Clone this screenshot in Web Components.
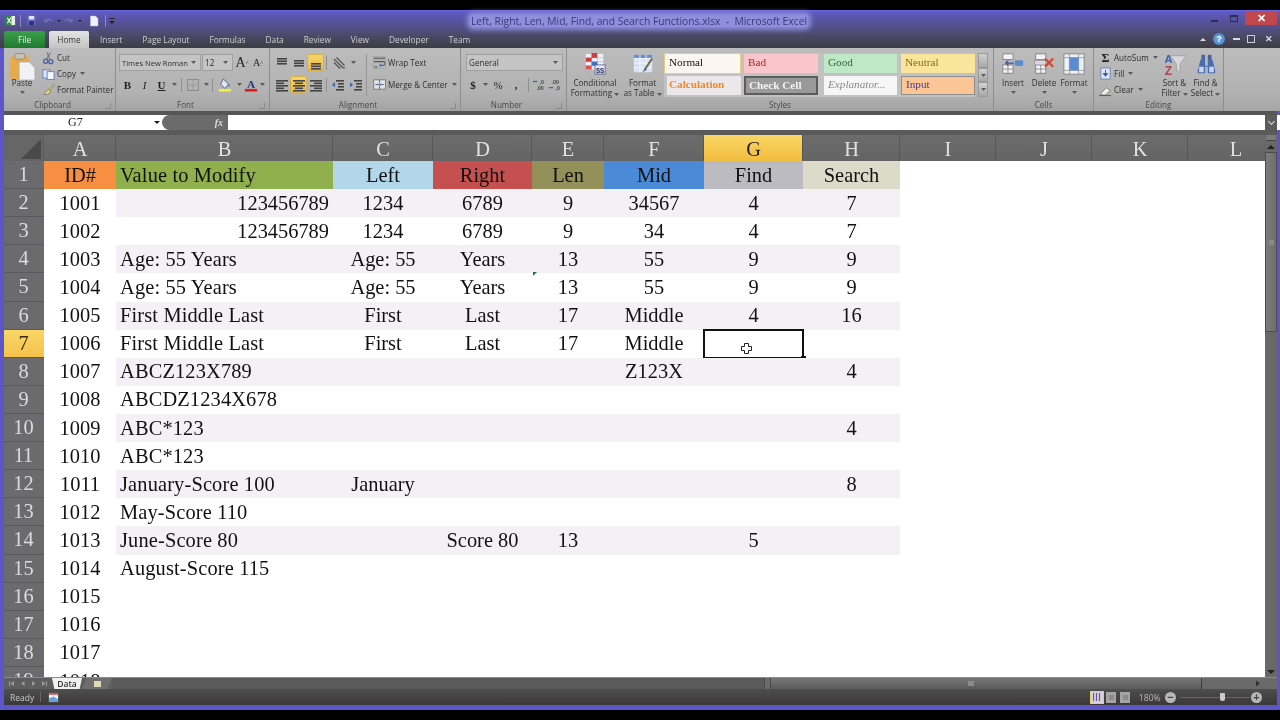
<!DOCTYPE html>
<html><head><meta charset="utf-8"><title>Excel</title>
<style>
html,body{margin:0;padding:0;background:#000;width:1280px;height:720px;overflow:hidden}
</style></head><body>
<x-excel>
  <x-titlebar slot="title"></x-titlebar>
  <x-tabs slot="tabs"></x-tabs>
  <x-ribbon slot="ribbon">
    <x-group label="Clipboard" w="112" launcher>
      <x-big icon="paste" w="36" line1="Paste" caret></x-big>
      <div style="display:flex;flex-direction:column;gap:2px;padding:2px 0 0 2px">
        <x-small icon="cut" text="Cut"></x-small>
        <x-small icon="copy" text="Copy" caret></x-small>
        <x-small icon="painter" text="Format Painter"></x-small>
      </div>
    </x-group>
    <x-group label="Font" w="154" launcher>
      <div style="display:flex;flex-direction:column;gap:5px;padding:6px 0 0 3px">
        <div style="display:flex;align-items:center;gap:1px">
          <x-combo w="82" text="Times New Roman" fs="7.6"></x-combo><x-combo w="31" text="12"></x-combo>
          <x-tool w="16" tx="A" ts="14" sup="1"></x-tool><x-tool w="14" tx="A" ts="10" sup="1"></x-tool>
        </div>
        <div style="display:flex;align-items:center">
          <x-tool w="17" tx="B" ts="11" tb="1"></x-tool><x-tool w="17" tx="I" ts="11" ti="1"></x-tool><x-tool w="17" tx="U" ts="11" tb="1" tu="1"></x-tool>
          <x-tool w="9" caretonly="1"></x-tool><x-sep></x-sep><x-tool w="18" icon="borders"></x-tool><x-tool w="8" caretonly="1"></x-tool><x-sep></x-sep>
          <x-tool w="20" icon="fill"></x-tool><x-tool w="8" caretonly="1"></x-tool><x-tool w="15" icon="fontcolor"></x-tool><x-tool w="8" caretonly="1"></x-tool>
        </div>
      </div>
    </x-group>
    <x-group label="Alignment" w="191" launcher>
      <div style="display:flex;flex-direction:column;gap:5px;padding:6px 0 0 3px;width:93px">
        <div style="display:flex;align-items:center">
          <x-tool w="17" icon="atop"></x-tool><x-tool w="17" icon="amid"></x-tool><x-tool w="17" icon="abot" on="1"></x-tool><x-sep></x-sep><x-tool w="20" icon="orient"></x-tool><x-tool w="9" caretonly="1"></x-tool>
        </div>
        <div style="display:flex;align-items:center">
          <x-tool w="17" icon="aleft"></x-tool><x-tool w="17" icon="acenter" on="1"></x-tool><x-tool w="17" icon="aright"></x-tool><x-sep></x-sep><x-tool w="18" icon="indl"></x-tool><x-tool w="17" icon="indr"></x-tool>
        </div>
      </div>
      <div style="width:1px;height:42px;margin:6px 6px 0 0;background:#969696"></div>
      <div style="display:flex;flex-direction:column;gap:5px;padding-top:6px">
        <x-small icon="wrap" text="Wrap Text" h="17"></x-small>
        <x-small icon="merge" text="Merge &amp; Center" caret h="17"></x-small>
      </div>
    </x-group>
    <x-group label="Number" w="106" launcher>
      <div style="display:flex;flex-direction:column;gap:5px;padding:6px 0 0 5px">
        <x-combo w="97" text="General"></x-combo>
        <div style="display:flex;align-items:center">
          <x-tool w="14" tx="$" ts="11" tb="1"></x-tool><x-tool w="10" caretonly="1"></x-tool><x-tool w="16" tx="%" ts="11"></x-tool><x-tool w="20" tx="," ts="11" tb="1"></x-tool><x-sep></x-sep><x-tool w="16" icon="incd"></x-tool><x-tool w="16" icon="decd"></x-tool>
        </div>
      </div>
    </x-group>
    <x-group label="Styles" w="427">
      <x-big icon="cond" w="56" line1="Conditional" line2="Formatting" caret2></x-big>
      <x-big icon="table" w="39" line1="Format" line2="as Table" caret2></x-big>
      <x-gallery></x-gallery>
    </x-group>
    <x-group label="Cells" w="100">
      <div style="display:flex;padding-left:3px">
        <x-big icon="ins" w="32" line1="Insert" caret></x-big>
        <x-big icon="del" w="30" line1="Delete" caret></x-big>
        <x-big icon="fmt" w="30" line1="Format" caret></x-big>
      </div>
    </x-group>
    <x-group label="Editing" w="130">
      <div style="display:flex;flex-direction:column;gap:2px;padding:2px 0 0 5px;width:60px">
        <x-small icon="sigma" text="AutoSum" caret></x-small>
        <x-small icon="filld" text="Fill" caret></x-small>
        <x-small icon="clear" text="Clear" caret></x-small>
      </div>
      <x-big icon="sort" w="31" line1="Sort &amp;" line2="Filter" caret2></x-big>
      <x-big icon="find" w="31" line1="Find &amp;" line2="Select" caret2></x-big>
    </x-group>
  </x-ribbon>
  <x-formula slot="formula"></x-formula>
  <x-sheet slot="sheet"></x-sheet>
  <x-vscroll slot="vscroll"></x-vscroll>
  <x-sheetbar slot="sheetbar"></x-sheetbar>
  <x-status slot="status"></x-status>
</x-excel>
<script>
const UI='"Noto Sans","Open Sans",sans-serif';
const lines=(ys,col='#444')=>ys.map(([x,y,w])=>`<rect x="${x}" y="${y}" width="${w}" height="1.6" fill="${col}"/>`).join('');
const ICONS={
 xl:[12,`<rect x="0.5" y="0.5" width="11" height="11" fill="#e8f0e4" stroke="#2f7a3a"/><rect x="1" y="1" width="6" height="10" fill="#2e8b40"/><path d="M2.5 3l4 6M6.5 3l-4 6" stroke="#fff" stroke-width="1.3"/>`],
 save:[12,`<rect x="1" y="1" width="10" height="10" fill="#5a62c0"/><rect x="3" y="1" width="6" height="4" fill="#dfe3f5"/><rect x="3.5" y="7" width="5" height="4" fill="#2b2f70"/>`],
 undo:[12,`<path d="M3 7a4 4 0 0 1 7-1" fill="none" stroke="#6f72b8" stroke-width="1.6"/><path d="M1.5 4l2 4 3-2z" fill="#6f72b8"/>`],
 redo:[12,`<path d="M9 7a4 4 0 0 0-7-1" fill="none" stroke="#6f72a8" stroke-width="1.6"/><path d="M10.5 4l-2 4-3-2z" fill="#6f72a8"/>`],
 doc:[12,`<path d="M2.5 1h5l2.5 2.5V11h-7.5z" fill="#f2f2fb" stroke="#b9bbe0" stroke-width=".5"/>`],
 cust:[8,`<rect x="1" y="1" width="6" height="1" fill="#222"/><path d="M1 4h6l-3 3z" fill="#222"/>`],
 paste:[24,`<rect x="1" y="3" width="17" height="20" rx="1" fill="#e5ab4c"/><rect x="5" y="0.5" width="9" height="5" rx="1" fill="#c9c2b4" stroke="#8a7a5a" stroke-width=".6"/><path d="M9 8h9l5 5v11H9z" fill="#f2f2f6" stroke="#a6a6b4" stroke-width=".6"/>`],
 cut:[14,`<circle cx="4" cy="11" r="2.2" fill="none" stroke="#4a5fa8" stroke-width="1.4"/><circle cx="9.5" cy="11.5" r="2.2" fill="none" stroke="#4a5fa8" stroke-width="1.4"/><path d="M5 9L9 1.5M8.5 9.5L5.5 1.5" stroke="#6e7480" stroke-width="1.2"/>`],
 copy:[14,`<rect x="1" y="3" width="7.5" height="9" fill="#dfe8f6" stroke="#5a83c0"/><rect x="5.5" y="5" width="7.5" height="8.5" fill="#f6f6fa" stroke="#5a83c0"/>`],
 painter:[14,`<path d="M7.5 7l5-5.5 1 1L9 8z" fill="#d8c068" stroke="#7a6a30" stroke-width=".5"/><path d="M2 12.5c2-.5 2-5 5-5.5l2 2c-.5 3-4 4-7 3.500z" fill="#e8dc80" stroke="#555" stroke-width=".6"/>`],
 borders:[14,`<rect x="1.500" y="1.500" width="11" height="11" fill="none" stroke="#8b8b8b"/><path d="M7 1.500v11M1.500 7h11" stroke="#9d9d9d"/>`],
 fill:[16,`<path d="M6 1l6 6-4 5-5-5z" fill="#dfe6f2" stroke="#4a5f90"/><circle cx="12.500" cy="8.500" r="1" fill="#3b6fc0"/><rect x="1" y="12.500" width="14" height="3" fill="#f6ee3c"/>`],
 fontcolor:[16,`<text x="8" y="11.500" font-size="13" font-family="Liberation Serif" font-weight="700" text-anchor="middle" fill="#20388a">A</text><rect x="1" y="12.500" width="14" height="3" fill="#e21b22"/>`],
 atop:[14,lines([[2,2,10],[2,4.500,10],[2,7,10]])],
 amid:[14,lines([[2,4,10],[2,6.500,10],[2,9,10]])],
 abot:[14,lines([[2,7,10],[2,9.500,10],[2,12,10]])],
 aleft:[14,lines([[1,2,12],[1,4.500,8],[1,7,12],[1,9.500,8],[1,12,12]])],
 acenter:[14,lines([[1,2,12],[3,4.500,8],[1,7,12],[3,9.500,8],[1,12,12]])],
 aright:[14,lines([[1,2,12],[5,4.500,8],[1,7,12],[5,9.500,8],[1,12,12]])],
 orient:[14,`<path d="M2 3l9 9M4.500 1.500l8 8M2 6.500l6 6" stroke="#555" stroke-width="1.300"/><path d="M11 12l2 1-1-2.500z" fill="#444"/>`],
 indl:[14,lines([[5,2,8],[7,5,6],[7,8,6],[5,11,8]])+`<path d="M1 6.800l3-2.500v5z" fill="#3a68b0"/>`],
 indr:[14,lines([[5,2,8],[7,5,6],[7,8,6],[5,11,8]])+`<path d="M4 6.800l-3-2.500v5z" fill="#3a68b0"/>`],
 wrap:[14,`<rect x="1" y="1.500" width="12" height="2" fill="#777"/><path d="M1 6h10a2 2 0 0 1 0 4H8" fill="none" stroke="#555" stroke-width="1.200"/><path d="M8.500 8l-2 2 2 2z" fill="#3a68b0"/><rect x="1" y="11" width="4" height="1.500" fill="#777"/><rect x=".5" y=".5" width="13" height="13" fill="none" stroke="#999" stroke-width=".5"/>`],
 merge:[14,`<rect x=".8" y="2" width="12.500" height="10" fill="#e4e4e8" stroke="#666" stroke-width=".8"/><path d="M7 2v3M7 9v3" stroke="#666"/><path d="M2.500 7h3M11.500 7h-3" stroke="#3a68b0" stroke-width="1.200"/><text x="7" y="8.800" font-size="5" text-anchor="middle" font-family="Liberation Sans" fill="#333">a</text>`],
 incd:[16,`<text x="8.500" y="7" font-size="6" font-weight="700" font-family="Liberation Sans" fill="#444">,0</text><text x="5" y="14" font-size="6" font-weight="700" font-family="Liberation Sans" fill="#444">.00</text><path d="M1 4h5" stroke="#3a68b0" stroke-width="1.500"/>`],
 decd:[16,`<text x="4" y="7" font-size="6" font-weight="700" font-family="Liberation Sans" fill="#444">.00</text><text x="8.500" y="14" font-size="6" font-weight="700" font-family="Liberation Sans" fill="#444">,0</text><path d="M1 11h5" stroke="#3a68b0" stroke-width="1.500"/>`],
 cond:[24,`<rect x="2" y="1" width="19" height="17" fill="#eef0f6"/><path d="M2 5.200h19M2 9.500h19M2 13.800h19M8.300 1v17M14.600 1v17" stroke="#9fb4d4" stroke-width=".7"/><rect x="8.300" y="0" width="6" height="5.200" fill="#cf3a3a"/><rect x="2" y="5.200" width="6.300" height="4.300" fill="#cf3a3a"/><rect x="8.300" y="9.500" width="6.300" height="4.300" fill="#3b73c8"/><rect x="2" y="13.800" width="6.300" height="4.200" fill="#e05050"/><rect x="12" y="13" width="11" height="10" fill="#e8e8f0" stroke="#4a4f78" stroke-width=".8"/><text x="17.500" y="21.500" font-size="8" font-weight="700" text-anchor="middle" font-family="Liberation Sans" fill="#30386a">$$</text>`],
 table:[24,`<rect x="2" y="2" width="20" height="19" fill="#d8e2f4"/><rect x="2" y="2" width="20" height="4" fill="#6a8fcc"/><path d="M2 6h20M2 11h20M2 16h20M8.700 2v19M15.400 2v19" stroke="#f5f7fc" stroke-width="1"/><path d="M22 6L14 18" stroke="#6a7050" stroke-width="2.400"/><path d="M14.500 16l-3 5 4.500-2.500z" fill="#4e6090"/>`],
 ins:[24,`<rect x="1" y="1" width="11" height="6" fill="#f2f2f4" stroke="#666" stroke-width=".7"/><rect x="1" y="13" width="11" height="9" fill="#f2f2f4" stroke="#666" stroke-width=".7"/><path d="M6.500 13v9M1 17.500h11" stroke="#666" stroke-width=".7"/><rect x="14" y="8" width="9" height="6" fill="#5a8ad0"/><path d="M13 11H4M7 8l-3 3 3 3" fill="none" stroke="#2f58a0" stroke-width="1.200"/>`],
 del:[24,`<rect x="3" y="1" width="11" height="6" fill="#f2f2f4" stroke="#666" stroke-width=".7"/><rect x="3" y="13" width="11" height="9" fill="#f2f2f4" stroke="#666" stroke-width=".7"/><path d="M8.500 13v9M3 17.500h11" stroke="#666" stroke-width=".7"/><rect x="2" y="8" width="12" height="5" fill="#d8d8de" stroke="#777" stroke-width=".5"/><path d="M13 6l9 9M22 6l-9 9" stroke="#d8402c" stroke-width="2.200"/>`],
 fmt:[24,`<rect x="1" y="1" width="22" height="22" fill="#eceff6" stroke="#777" stroke-width=".8"/><path d="M1 5h22M1 19h22M7 1v22M17 1v22" stroke="#8c8c98" stroke-width=".8"/><rect x="7" y="5" width="10" height="14" fill="#5a8ad0"/>`],
 sigma:[14,`<text x="7" y="12" font-size="13" font-weight="700" text-anchor="middle" font-family="Liberation Serif" fill="#222">Σ</text>`],
 filld:[14,`<rect x="2" y="1" width="10" height="12" fill="#dfe6f5" stroke="#6a86bc"/><path d="M7 3v6M4.500 7L7 10l2.500-3z" fill="#2f5fb4" stroke="#2f5fb4"/>`],
 clear:[14,`<path d="M2 11l6-6 4 3-5 5H4z" fill="#f0eee8" stroke="#666" stroke-width=".8"/><path d="M0 13.500h13" stroke="#555"/>`],
 sort:[26,`<path d="M8 3h17l-6.500 9v9l-4-2.500V12z" fill="#d7d7d9" stroke="#8a8a90" stroke-width=".6"/><text x="6" y="11" font-size="12" font-weight="700" text-anchor="middle" font-family="Liberation Sans" fill="#3a62ae">A</text><text x="6" y="24" font-size="13" font-weight="700" text-anchor="middle" font-family="Liberation Sans" fill="#b0404a">Z</text>`],
 find:[24,`<rect x="7" y="2" width="4" height="6" rx="1" fill="#50609a"/><rect x="14" y="2" width="4" height="6" rx="1" fill="#50609a"/><path d="M6 7h5v7h3V7h5l3 12v3h-8v-7h-3v7H3v-3z" fill="#4a6cb0"/><rect x="4.500" y="15" width="5" height="6" fill="#c9d4ea"/><rect x="15.500" y="15" width="5" height="6" fill="#c9d4ea"/>`],
 macro:[12,`<rect x="1" y="1" width="10" height="10" fill="#eaf2fb"/><rect x="1" y="1" width="10" height="2" fill="#d05050"/><path d="M1 7l5-2 5 3v3H1z" fill="#6aa0dc"/>`]
};
function def(name,html,init){
 customElements.define(name,class extends HTMLElement{
  constructor(){super();this.attachShadow({mode:'open'});}
  connectedCallback(){
    const a=n=>this.getAttribute(n);
    this.shadowRoot.innerHTML=typeof html==='function'?html(a,n=>this.hasAttribute(n)):html;
    if(init)init(this.shadowRoot,this);
  }
 });
}
def('x-icon',a=>{const[v,c]=ICONS[a('name')];const s=a('size')||v;
 return `<style>:host{display:inline-block;width:${s}px;height:${s}px;flex:none;line-height:0}svg{display:block;width:100%;height:100%;overflow:visible}</style><svg viewBox="0 0 ${v} ${v}">${c}</svg>`});
def('x-excel',`<style>
:host{display:flex;flex-direction:column;width:1280px;height:720px;box-sizing:border-box;padding:10px 0;background:#000;filter:blur(.45px)}
.win{flex:1;display:flex;flex-direction:column;min-height:0;background:#5c56c8;border-style:solid;border-color:#5c56c8;border-width:0 3px 5px 4px;font-family:${UI}}
.head{background:linear-gradient(#615bc4 0,#55529c 30%,#4c4b6c 62%,#3d3d42 100%);margin:0 -3px 0 -4px;padding:0 3px 0 4px;border-top:1px solid #6a64e0;}
.gap{height:4px;background:#565656}.gap2{height:5px;background:#5a5a5a}
.mid{flex:1;min-height:0;display:flex}
</style><div class="win"><div class="head"><slot name="title"></slot><slot name="tabs"></slot></div><slot name="ribbon"></slot><div class="gap"></div><slot name="formula"></slot><div class="gap2"></div><div class="mid"><slot name="sheet"></slot><slot name="vscroll"></slot></div><slot name="sheetbar"></slot><slot name="status"></slot></div>`);
def('x-titlebar',`<style>
:host{display:flex;align-items:center;height:19px;font-size:10.300px}
.qa{display:flex;align-items:center;width:120px}
.s{width:1px;height:12px;background:#8a88c8}
.t{flex:1;text-align:center;white-space:pre;padding-right:50px;font-family:"Open Sans",sans-serif}
.t span{color:#3a3a78;background:#8e8edc;box-shadow:0 0 5px 3px #8e8edc;border-radius:3px;padding:0 1px;line-height:12px;display:inline-block}
.w{display:flex;align-items:flex-start;height:14px;align-self:flex-start}
.b{width:20px;height:14px;display:flex;align-items:center;justify-content:center}
.min i{display:block;width:7px;height:2px;background:#2c2c4c;margin-top:5px}
.max i{display:block;width:8px;height:7px;border:1px solid #2c2c4c;border-top-width:2px;box-sizing:border-box}
.x{width:32px;background:#c0484c;color:#fff;font:700 11px "Liberation Sans",sans-serif;margin-left:1px}
.k{margin-left:3px;width:0;height:0;border:2px solid transparent;border-top:2.500px solid #222;margin-top:3px;flex:none}
</style><div class="qa"><x-icon name="xl" size="11" style="margin-left:1px"></x-icon><div class="s" style="margin-left:4px"></div><x-icon name="save" size="11" style="margin-left:5px"></x-icon><x-icon name="undo" style="margin-left:5px"></x-icon><i class="k"></i><x-icon name="redo" style="margin-left:2px"></x-icon><i class="k"></i><x-icon name="doc" style="margin-left:6px"></x-icon><div class="s" style="margin-left:5px"></div><x-icon name="cust" style="margin-left:2px"></x-icon></div>
<div class="t"><span>Left, Right, Len, Mid, Find, and Search Functions.xlsx  -  Microsoft Excel</span></div>
<div class="w"><div class="b min"><i></i></div><div class="b max"><i></i></div><div class="b x">✕</div></div>`);
def('x-tabs',`<style>
:host{display:flex;align-items:flex-end;height:18px;font-size:8.300px;color:#cfcfcf;font-family:"Open Sans",sans-serif}
.f{width:41px;height:17px;background:linear-gradient(#3aa04a,#1f7a2f);color:#e6f2e6;display:flex;align-items:center;justify-content:center;border-radius:2px 2px 0 0;margin-right:4px}
.h{width:40px;height:17px;background:linear-gradient(#e4e4e4,#c4c4c4);color:#333;display:flex;align-items:center;justify-content:center;border-radius:2px 2px 0 0;margin-right:1px}
.n{padding:0 10px;height:17px;line-height:17px;white-space:nowrap}
.sp{flex:1}.r{display:flex;align-items:center;height:18px;padding-right:4px;color:#ddd}
.help{width:12px;height:12px;border-radius:50%;background:radial-gradient(#7ab0e8,#3a78c4);color:#fff;font:700 9px "Liberation Sans";display:flex;align-items:center;justify-content:center;margin:0 8px 0 7px}
.up{width:0;height:0;border:3px solid transparent;border-bottom:3.500px solid #ddd;margin-top:-3px}
.d{width:7px;height:2px;background:#ddd;margin-right:7px}.rs{width:8px;height:8px;border:1px solid #ccc;box-sizing:border-box;margin-right:10px}
</style><div class="f">File</div><div class="h">Home</div>
<div class="n">Insert</div><div class="n">Page Layout</div><div class="n">Formulas</div><div class="n">Data</div><div class="n">Review</div><div class="n">View</div><div class="n">Developer</div><div class="n">Team</div>
<div class="sp"></div><div class="r"><div class="up"></div><div class="help">?</div><div class="d"></div><div class="rs"></div><div style="font:700 9px 'Liberation Sans'">✕</div></div>`);
def('x-ribbon',`<style>:host{display:flex;height:63px;background:linear-gradient(#bcbcbc,#b2b2b2 70%,#a6a6a6);margin:0 -3px 0 0;font-size:8.100px;color:#2e2e2e;font-family:"Open Sans",sans-serif;overflow:hidden}
::slotted(*){flex:none}</style><slot></slot>`);
def('x-group',(a,h)=>`<style>
:host{display:flex;flex-direction:column;width:${a('w')}px;box-sizing:border-box;border-right:1px solid #8e8e8e}
.b{display:flex;height:51px}
.l{height:12px;line-height:12px;text-align:center;color:#4a4a4a;position:relative;background:linear-gradient(#aeaeae,#a3a3a3);box-sizing:border-box;padding-right:${h('launcher')?14:0}px}
.k{position:absolute;right:4px;top:4px;width:5px;height:5px;border:1px solid #8a8a8a;border-width:0 1px 1px 0}
::slotted(*){flex:none}
</style><div class="b"><slot></slot></div><div class="l">${a('label')}${h('launcher')?'<span class="k"></span>':''}</div>`);
const caret=`<svg width="5" height="3" viewBox="0 0 5 3" style="flex:none"><path d="M0 0h5L2.500 3z" fill="#5a5a5a"/></svg>`;
def('x-big',(a,h)=>`<style>
:host{display:flex;flex-direction:column;align-items:center;width:${a('w')}px;padding-top:5px;box-sizing:border-box}
.i{height:25px;display:flex;align-items:flex-start;justify-content:center}
.t{line-height:9.500px;height:9.500px;text-align:center;white-space:nowrap}
.c{height:9.500px;display:flex;align-items:center;justify-content:center}
</style><div class="i"><x-icon name="${a('icon')}" size="${a('icon')==='paste'?27:(a('icon')==='sort'?24:22)}"></x-icon></div><div class="t">${a('line1')}</div>${h('caret')?`<div class="c">${caret}</div>`:`<div class="t">${a('line2')||''}${h('caret2')?' '+caret:''}</div>`}`);
def('x-small',(a,h)=>`<style>
:host{display:flex;align-items:center;gap:2px;height:${a('h')||14}px;white-space:nowrap}
span{margin-right:2px}
</style><x-icon name="${a('icon')}" size="13"></x-icon><span>${a('text')}</span>${h('caret')?caret:''}`);
def('x-combo',a=>`<style>
:host{display:flex;align-items:center;justify-content:space-between;width:${a('w')}px;height:17px;box-sizing:border-box;padding:0 4px 0 2px;background:#c4c4c4;border:1px solid #a0a0a0;white-space:nowrap;overflow:hidden;${a('fs')?`font-size:${a('fs')}px`:''}}
</style><span>${a('text')}</span>${caret}`);
def('x-sep',`<style>:host{display:block;width:1px;height:14px;background:#8e8e8e;margin:0 2px;flex:none}</style>`);
def('x-tool',(a)=>{
 const st=[`font-size:${a('ts')||10}px`,a('tb')?'font-weight:700':'',a('ti')?'font-style:italic':'',a('tu')?'text-decoration:underline':''].join(';');
 return `<style>
:host{display:flex;align-items:center;justify-content:center;flex:none;width:${a('w')}px;height:17px;box-sizing:border-box;font-family:"Liberation Serif",serif;color:#222;${a('on')?'background:linear-gradient(#f2d66a,#e9b94a);border:1px solid #d8b050;border-radius:2px;':''}}
sup{font-size:6px;line-height:0;color:#444}
</style>${a('icon')?`<x-icon name="${a('icon')}" size="14"></x-icon>`:''}${a('tx')?`<span style="${st}">${a('tx')}</span>`:''}${a('sup')?'<sup>^</sup>':''}${a('caretonly')?caret:''}`;});
def('x-gallery',`<style>
:host{display:flex;margin:5px 0 0 2px;height:44px;box-sizing:border-box;font-family:"Liberation Serif",serif;font-size:11.200px}
.g{display:grid;grid-template-columns:80px 80px 77px 74px;grid-template-rows:21px 21px;row-gap:2px;background:#c2c2c2;border-radius:1px}
.g div{display:flex;align-items:center;padding:0 0 3px 4px;box-sizing:border-box;white-space:nowrap;overflow:hidden}
.g div:nth-child(4n+1){margin-right:3px}.g div:nth-child(4n+2){margin-right:6px}.g div:nth-child(4n+3){margin-right:4px}
.sp{display:flex;flex-direction:column;margin-left:3px;width:10px}
.sp i{flex:1;background:linear-gradient(#d0d0d0,#a8a8a8);border:1px solid #9a9a9a;display:flex;align-items:center;justify-content:center}
</style><div class="g">
<div style="background:#fbf7f0;border:1.500px solid #e3cf76;color:#111">Normal</div>
<div style="background:#fbc6cb;color:#a22828;margin-top:1px;margin-bottom:1px">Bad</div>
<div style="background:#bfe9c6;color:#2e6a30;margin-top:1px;margin-bottom:1px">Good</div>
<div style="background:#fbe49c;color:#8a6a18;margin-top:1px;margin-bottom:1px">Neutral</div>
<div style="background:#ece8ea;color:#ed8a2a;font-weight:700;margin-bottom:2px;margin-left:3px;padding-left:2px">Calculation</div>
<div style="background:#9a9a9a;border:2px solid #5c5c5c;color:#f4f4f4;font-weight:700;margin-bottom:2px;padding-left:3px;padding-bottom:1px">Check Cell</div>
<div style="background:#f6f6f6;color:#888;font-style:italic;margin-bottom:2px">Explanator...</div>
<div style="background:#fbc596;border:1px solid #8f8f8f;color:#444088;margin-bottom:2px">Input</div>
</div><div class="sp"><i></i><i>${caret}</i><i>${caret}</i></div>`);
def('x-formula',`<style>
:host{display:flex;height:15px;background:#fff;margin-right:-3px}
.n{width:156px;display:flex;align-items:center;font:12px "Liberation Serif",serif;color:#222;box-sizing:border-box;justify-content:space-between}
.n span{margin-left:64px}
.c{width:0;height:0;border:3px solid transparent;border-top:3.500px solid #222;margin:3px 0 0 0}
.p{width:66px;margin-left:2px;background:#6b6b6b;border-radius:8px 0 0 8px;display:flex;align-items:center;justify-content:flex-end;padding-right:5px;box-sizing:border-box;font:italic 700 10px "Liberation Serif",serif;color:#ddd}
.i{flex:1}.d{width:12px;background:#5c5c5c;display:flex;align-items:center;justify-content:center;color:#ddd;margin-right:3px}
.d i{width:4px;height:4px;border:solid #ddd;border-width:0 1.500px 1.500px 0;transform:rotate(45deg);margin-top:-2px}
</style><div class="n"><span>G7</span><i class="c"></i></div><div class="p">fx</div><div class="i"></div><div class="d"><i></i></div>`);
const rows=[
['ID#','Value to Modify','Left','Right','Len','Mid','Find','Search'],
['1001','#123456789','1234','6789','9','34567','4','7'],
['1002','#123456789','1234','6789','9','34','4','7'],
['1003','Age: 55 Years','Age: 55','Years','13','55','9','9'],
['1004','Age: 55 Years','Age: 55','Years','13','55','9','9'],
['1005','First Middle Last','First','Last','17','Middle','4','16'],
['1006','First Middle Last','First','Last','17','Middle','',''],
['1007','ABCZ123X789','','','','Z123X','','4'],
['1008','ABCDZ1234X678','','','','','',''],
['1009','ABC*123','','','','','','4'],
['1010','ABC*123','','','','','',''],
['1011','January-Score 100','January','','','','','8'],
['1012','May-Score 110','','','','','',''],
['1013','June-Score 80','','Score 80','13','','5',''],
['1014','August-Score 115','','','','','',''],
['1015'],['1016'],['1017'],['1018']];
const heads=['#f68f42','#8fb04c','#b3d7ea','#c5504f','#94905a','#4a8ad6','#bdbbc2','#dcdac8'];
const cols='ABCDEFGHIJKL'.split('');
def('x-sheet',()=>{
 let h=`<div class="corner"><i></i></div>`;
 cols.forEach(c=>h+=`<div class="ch${c==='G'?' on':''}">${c}</div>`);
 rows.forEach((r,i)=>{
  const n=i+1;
  h+=`<div class="rh${n===7?' on':''}">${n}</div>`;
  for(let c=0;c<12;c++){
   let v=r[c]||'',cl='d';
   if(c===1)cl+=' l';
   if(v[0]==='#'&&n>1){v=v.slice(1);cl='d r';}
   let s='';
   if(n===1&&c<8)s=`background:${heads[c]}`;
   else if(n>1&&n<=14&&n%2===0&&c>=1&&c<8)s='background:#f3f1f5';
   let extra='';
   if(n===7&&c===6)extra='<x-sel></x-sel>';
   if(n===5&&c===4)extra='<b class="tri"></b>';
   h+=`<div class="${cl}" style="${s}">${v}${extra}</div>`;
  }
 });
 return `<style>
:host{display:block;width:1261px;flex:none;height:100%;overflow:hidden;background:#fff}
.g{display:grid;grid-template-columns:40px 72px 217px 100px 99px 72px 100px 99px 97px 96px 96px 96px 96px;grid-template-rows:26px;grid-auto-rows:28.120px;font:20.400px "Liberation Serif",serif;color:#111;width:1280px}
.corner{background:#666;position:relative;border-right:1px solid #5a5a5a;box-sizing:border-box}
.corner i{position:absolute;right:2px;bottom:2px;width:0;height:0;border-style:solid;border-width:0 0 20px 20px;border-color:transparent transparent #4a4a4a transparent}
.ch{background:linear-gradient(#6c6c6c,#646464);color:#e2e2e2;display:flex;align-items:center;justify-content:center;border-right:1px solid #565656;box-sizing:border-box;padding:2px 0 0 1px}
.ch.on{background:linear-gradient(#f9d766,#f2bd3e);color:#222}
.rh{background:#6b6a6c;color:#dcdcdc;display:flex;align-items:center;justify-content:center;border-bottom:1px solid #59595b;box-sizing:border-box;padding-right:1px}
.rh.on{background:linear-gradient(#f9d766,#f4c24c);color:#3a2a10}
.d{display:flex;align-items:center;justify-content:center;white-space:nowrap;position:relative;min-width:0}
.d.l{justify-content:flex-start;padding-left:4px;letter-spacing:.15px}.d.r{justify-content:flex-end;padding-right:4px}
.tri{position:absolute;left:1px;top:-1px;width:0;height:0;border-style:solid;border-width:4px 4px 0 0;border-color:#1a7a44 transparent transparent transparent}
</style><div class="g">${h}</div>`;});
def('x-sel',`<style>
:host{position:absolute;left:-1px;right:-1px;top:-1px;bottom:-1px;border:2px solid #111;box-sizing:border-box;display:block}
.h{position:absolute;right:-4px;bottom:-4px;width:5px;height:5px;background:#111}
svg{position:absolute;left:36px;top:12px}
</style><svg width="11" height="11" viewBox="0 0 11 11"><path d="M3.500.5h4v3h3v4h-3v3h-4v-3h-3v-4h3z" fill="#fff" stroke="#222"/></svg><div class="h"></div>`);
def('x-vscroll',`<style>
:host{display:flex;flex-direction:column;width:12px;flex:none;background:#686868}
.split{height:6px;background:#7a7a7a;border-bottom:1px solid #444;box-sizing:border-box;margin:0 1px}
.arrow{height:11px;display:flex;align-items:center;justify-content:center}
.up{width:0;height:0;border:4px solid transparent;border-bottom:4px solid #222;margin-top:-4px}
.dn{width:0;height:0;border:4px solid transparent;border-top:4px solid #222;margin-top:4px}
.th{height:180px;background:linear-gradient(90deg,#7c7c7c,#6e6e6e);border:1px solid #4c4c4c;box-sizing:border-box;display:flex;align-items:center;justify-content:center}
.th i{width:5px;height:5px;background:#8a8a8a}
.sp{flex:1}
</style><div class="split"></div><div class="arrow"><i class="up"></i></div><div class="th"><i></i></div><div class="sp"></div><div class="arrow"><i class="dn"></i></div>`);
const navArrow=d=>`<svg width="7" height="7" viewBox="0 0 7 7"><path d="${d}" fill="#9a9a9a"/></svg>`;
def('x-sheetbar',`<style>
:host{display:flex;align-items:stretch;height:12px;background:#5e5e5e;border-top:1px solid #8a8a8a;box-sizing:border-box;font-size:8.500px;color:#222}
.nav{width:48px;display:flex;align-items:center;justify-content:space-around;padding:0 2px;box-sizing:border-box}
.tab{width:30px;background:#f1f1f1;font-family:"Open Sans",sans-serif;font-weight:600;text-align:center;line-height:11px;clip-path:polygon(0 0,100% 0,92% 100%,8% 100%);color:#333}
.new{width:30px;display:flex;align-items:center;justify-content:center;background:#6e6e6e;clip-path:polygon(16% 0,100% 0,84% 100%,0 100%)}
.new i{width:7px;height:6px;background:#e2d8b8;display:block}
.sp{width:652px;background:#5a5a5a}
.div{width:5px;background:#6a6a6a;border:solid #4a4a4a;border-width:0 1px}
.th{flex:1;background:linear-gradient(#777,#5b5b5b);border-right:1px solid #3c3c3c;display:flex;align-items:center;justify-content:center}
.th i{width:6px;height:5px;background:#8a8a8a;display:block;margin-left:-30px}
.tr{width:75px;background:#6a6a6a;display:flex;align-items:center;justify-content:flex-end;padding-right:16px;box-sizing:border-box}
.tr svg path{fill:#333}
</style><div class="nav">${navArrow('M1 1h1v5H1zM6 1v5L2.500 3.500z')}${navArrow('M5.500 1v5L2 3.500z')}${navArrow('M2 1v5l3.500-2.500z')}${navArrow('M6 1h-1v5h1zM1 1v5l3.500-2.500z')}</div><div class="tab">Data</div><div class="new"><i></i></div><div class="sp"></div><div class="div"></div><div class="th"><i></i></div><div class="tr">${navArrow('M2 .5v6l4-3z')}</div>`);
def('x-status',`<style>
:host{display:flex;align-items:center;height:16px;background:linear-gradient(#4e4e4e,#3a3838);font-size:8.500px;color:#c8c8c8;font-family:"Open Sans",sans-serif;padding-left:6px}
.s{width:1px;height:10px;background:#666;margin:0 7px 0 6px}
.sp{flex:1}
.v{width:10px;height:11px;display:flex;align-items:center;justify-content:center;margin-right:4px;box-sizing:border-box;background:#a4a4a4}
.v.on{width:12px;background:#d8d0d8;outline:1.500px solid #e8d070;margin-right:3px}
.v i{display:block;width:5px;height:5px;background:#8a8a8a}
.v.on i{width:8px;height:8px;background:repeating-linear-gradient(90deg,#7a4aa0 0 1px,#c8c8d8 1px 3px)}
.z{width:22px;margin:0 4px 0 9px;color:#b8b8b8;white-space:nowrap}
.c{width:11px;height:11px;border-radius:50%;background:#b8b8b8;color:#444;display:flex;align-items:center;justify-content:center;font:700 11px/11px "Liberation Sans"}
.t{width:70px;height:1px;background:#666;margin:0 1px 0 4px;position:relative}
.t i{position:absolute;left:40px;top:-4px;width:5px;height:8px;background:#ccc;border-radius:1px 1px 3px 3px}
.e{width:15px}
</style><span>Ready</span><div class="s"></div><x-icon name="macro" size="11"></x-icon><div class="sp"></div>
<div class="v on"><i></i></div><div class="v"><i></i></div><div class="v" style="margin-right:0"><i></i></div><div class="z">180%</div><div class="c">−</div><div class="t"><i></i></div><div class="c">+</div><div class="e"></div>`);
</script>
</body></html>
